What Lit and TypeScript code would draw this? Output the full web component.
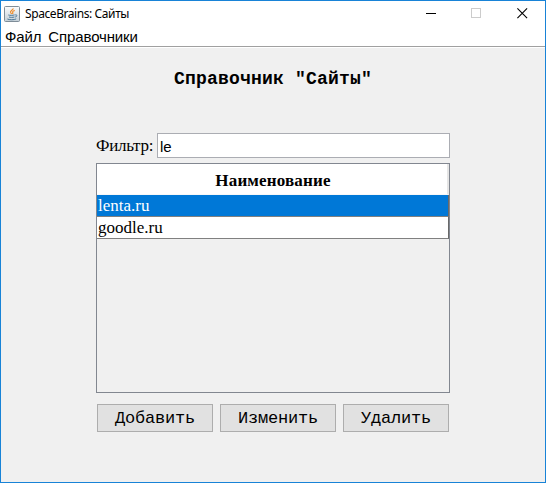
import { LitElement, html, css, svg } from "lit";
import { customElement, state } from "lit/decorators.js";
import { classMap } from "lit/directives/class-map.js";

const javaIcon = svg`
  <defs>
    <linearGradient id="plate" x1="0" y1="0" x2="0" y2="1">
      <stop offset="0" stop-color="#fbfcfd"/><stop offset="1" stop-color="#c3ced6"/>
    </linearGradient>
  </defs>
  <rect x=".5" y=".5" width="15" height="15" rx="1" fill="url(#plate)" stroke="#7f8d98"/>
  <path d="M9.2 2.4C9.3 4.2 5.6 4.6 6.6 6.6L7.7 8M10.8 4.4C8.6 5.1 8.1 5.8 8.9 6.8L8.6 8" fill="none" stroke="#ee8a26" stroke-width="1.1"/>
  <path d="M4.3 9C5.5 9.5 9 9.5 10.6 8.9M5 11C6.4 11.5 8.6 11.5 10.4 11M11.2 8.9C13.6 8.5 13.4 10.6 11.2 11M3.4 13C5 14 10.4 14 12.2 12.9" fill="none" stroke="#4b7898" stroke-width="1"/>`;

@customElement("app-root")
export class AppRoot extends LitElement {
  @state() private rows = ["lenta.ru", "goodle.ru"];
  @state() private selected = 0;

  static styles = css`
    :host { display: block; }
    * { box-sizing: border-box; }
    .window {
      width: 546px; height: 483px; border: 1px solid #1883d7; background: #f0f0f0;
      display: flex; flex-direction: column; overflow: hidden; color: #000;
    }
    .titlebar { height: 25px; flex: none; background: #fff; display: flex; align-items: center; padding-left: 3px; }
    .java { width: 16px; height: 16px; display: block; }
    .caption { font: 12px/16px "Noto Sans", sans-serif; margin-left: 5px; flex: 1; white-space: nowrap; letter-spacing: -0.42px; }
    .control { width: 45.5px; display: flex; justify-content: center; }
    .control svg { width: 11px; height: 11px; display: block; }
    .menubar {
      height: 22px; flex: none; background: #fff; border-bottom: 1px solid #fff;
      box-shadow: inset 0 -1px #a0a0a0; display: flex; gap: 7px; padding: 2px 0 0 4px;
      font: 15px/18px "Liberation Sans", sans-serif; letter-spacing: -.13px; white-space: nowrap;
    }
    .content { flex: 1; display: flex; flex-direction: column; padding: 19px 95px 0; }
    h1 { margin: 0; font: bold 18px/24px "Liberation Mono", monospace; letter-spacing: .2px; text-align: center; white-space: nowrap; }
    .filter { margin-top: 42px; display: flex; height: 25px; align-items: center; font: 17px/24px "Liberation Serif", serif; }
    .filter label { width: 61px; white-space: nowrap; letter-spacing: -.25px; }
    .field {
      flex: 1; min-width: 0; height: 25px; border: 1px solid #abadb3; background: #fff; padding: 1px 2px 0; border-radius: 0; outline: none;
      font: 15px/18px "Liberation Sans", sans-serif; color: #000;
    }
    .table { margin-top: 5px; height: 230px; border: 1px solid #828790; font: 17px/21px "Liberation Serif", serif; }
    .head { height: 31px; background: #fff; border-right: 2px solid #e5e5e5; font-weight: bold; text-align: center; line-height: 33px; border-bottom: 1px solid #f8f8f8; letter-spacing: .16px; padding-left: 2px; }
    .row { height: 22px; background: #fff; border-right: 1px solid #696969; border-bottom: 1px solid #808080; padding-left: 1px; }
    .row.selected { background: #0078d7; color: #fff; }
    .buttons { margin: 11px 1px 0; display: flex; gap: 7px; }
    button {
      height: 28px; width: 116px; padding: 1px 0 0; border: 1px solid #adadad; background: #e1e1e1; border-radius: 0;
      font: 17px/25px "Liberation Mono", monospace; letter-spacing: -.2px; color: #000;
    }
    .short { width: 106px; }
  `;

  render() {
    return html`
      <div class="window">
        <div class="titlebar">
          <svg class="java" viewBox="0 0 16 16">${javaIcon}</svg>
          <span class="caption">SpaceBrains: Сайты</span>
          <span class="control"><svg viewBox="0 0 11 11"><path d="M0 5.5H10" stroke="#000"/></svg></span>
          <span class="control"><svg viewBox="0 0 11 11"><rect x=".5" y=".5" width="9" height="9" fill="none" stroke="#ccc"/></svg></span>
          <span class="control"><svg viewBox="0 0 11 11"><path d="M.4 .4L10.1 10.1M10.1 .4L.4 10.1" stroke="#000" stroke-width="1.1"/></svg></span>
        </div>
        <div class="menubar"><span>Файл</span><span>Справочники</span></div>
        <div class="content">
          <h1>Справочник "Сайты"</h1>
          <div class="filter"><label>Фильтр:</label><input class="field" .value=${"le"} /></div>
          <div class="table">
            <div class="head">Наименование</div>
            ${this.rows.map((name, i) => html`
              <div class=${classMap({ row: true, selected: i === this.selected })} @click=${() => (this.selected = i)}>${name}</div>`)}
          </div>
          <div class="buttons">
            <button>Добавить</button><button>Изменить</button><button class="short">Удалить</button>
          </div>
        </div>
      </div>`;
  }
}
